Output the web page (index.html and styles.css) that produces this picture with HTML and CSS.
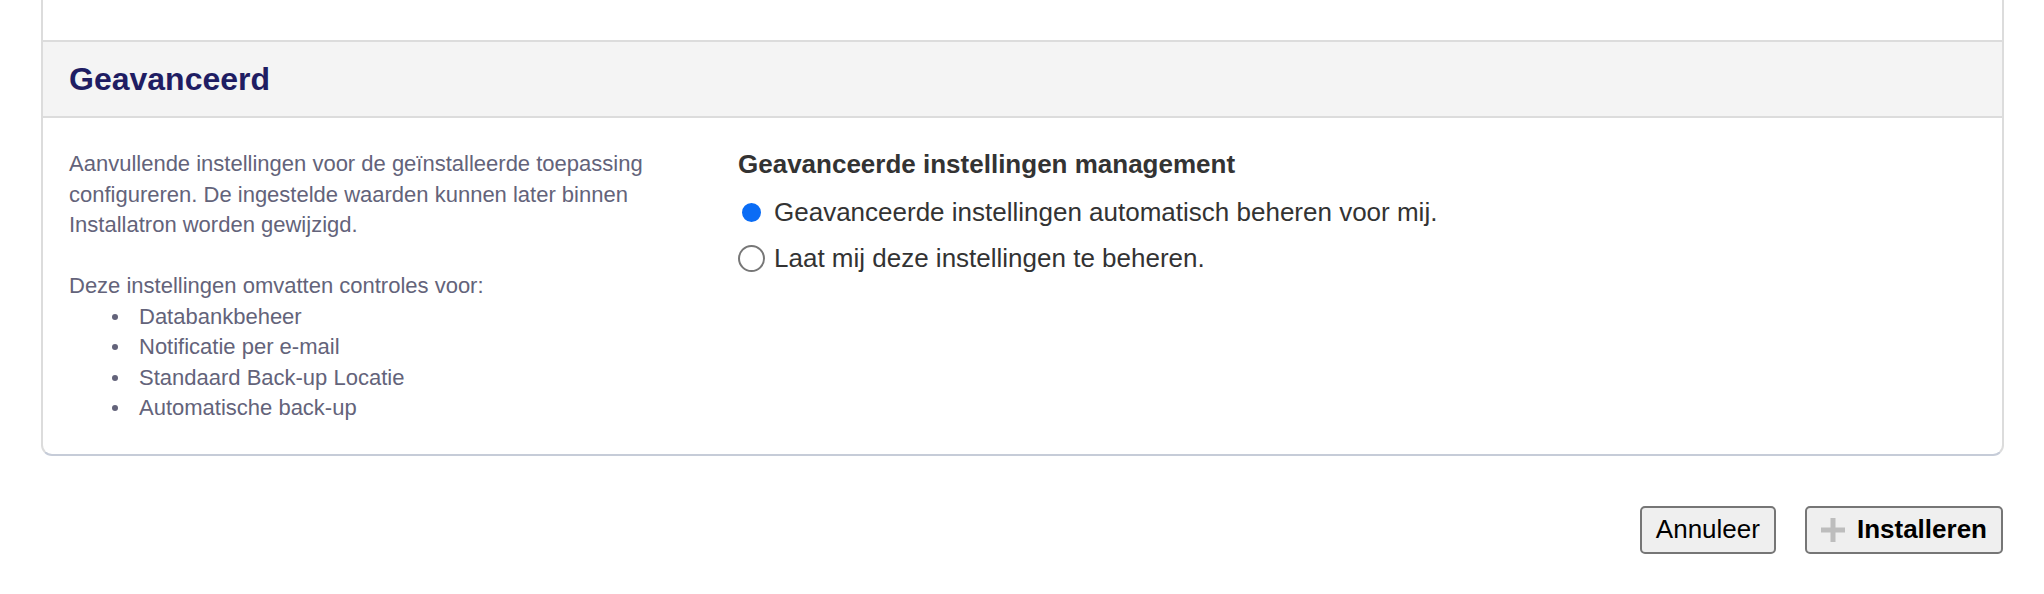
FILE: index.html
```html
<!DOCTYPE html>
<html lang="nl">
<head>
<meta charset="utf-8">
<title>Geavanceerd</title>
<link rel="stylesheet" href="styles.css">
</head>
<body>
<div class="card">
  <div class="prev-section"></div>
  <div class="section-head">
    <h2 class="section-title">Geavanceerd</h2>
  </div>
  <div class="section-body">
    <div class="col-info">
      <p class="info-text">Aanvullende instellingen voor de geïnstalleerde toepassing configureren. De ingestelde waarden kunnen later binnen Installatron worden gewijzigd.<br><br>Deze instellingen omvatten controles voor:</p>
      <ul class="info-list">
        <li>Databankbeheer</li>
        <li>Notificatie per e-mail</li>
        <li>Standaard Back-up Locatie</li>
        <li>Automatische back-up</li>
      </ul>
    </div>
    <div class="col-form">
      <div class="field-label">Geavanceerde instellingen management</div>
      <label class="radio-row"><input class="radio" type="radio" name="adv" checked><span>Geavanceerde instellingen automatisch beheren voor mij.</span></label>
      <label class="radio-row"><input class="radio" type="radio" name="adv"><span>Laat mij deze instellingen te beheren.</span></label>
    </div>
  </div>
</div>
<div class="actions">
  <button class="btn" type="button">Annuleer</button>
  <button class="btn btn-primary" type="button"><svg class="plus" width="24" height="24" viewBox="0 0 24 24" aria-hidden="true"><rect x="9.5" y="0" width="5" height="24" fill="#bdbdbd"/><rect x="0" y="9.5" width="24" height="5" fill="#bdbdbd"/></svg><span>Installeren</span></button>
</div>
</body>
</html>
```

FILE: styles.css
```css
* { box-sizing: border-box; }

html, body {
  margin: 0;
  padding: 0;
  background: #ffffff;
  font-family: "Liberation Sans", Arial, Helvetica, sans-serif;
}

.card {
  margin: 0 40px 0 41px;
  border: 2px solid #dcdcdc;
  border-top: none;
  border-bottom-color: #c6ccd8;
  border-radius: 0 0 11px 11px;
  background: #ffffff;
}

.prev-section {
  height: 40px;
}

.section-head {
  background: #f4f4f4;
  border-top: 2px solid #dcdcdc;
  border-bottom: 2px solid #dcdcdc;
  height: 78px;
  display: flex;
  align-items: center;
  padding: 0 26px;
}

.section-title {
  margin: 0;
  font-size: 32px;
  font-weight: bold;
  color: #1f1d63;
  line-height: 1;
}

.section-body {
  display: grid;
  grid-template-columns: 669px 1fr;
  padding: 31px 26px 30px 26px;
}

.info-text {
  margin: 0;
  font-size: 22px;
  line-height: 30.5px;
  color: #63637a;
  max-width: 645px;
}

.info-list {
  list-style: none;
  margin: 0;
  padding: 0;
  font-size: 22px;
  line-height: 30.5px;
  color: #63637a;
}

.info-list li {
  display: flex;
  align-items: center;
}

.info-list li::before {
  content: "";
  width: 6px;
  height: 6px;
  border-radius: 50%;
  background: #63637a;
  margin: 0 21px 0 43px;
  flex: none;
}

.field-label {
  font-size: 26px;
  font-weight: bold;
  color: #333333;
  line-height: 30px;
  margin-bottom: 10px;
}

.radio-row {
  display: flex;
  align-items: center;
  height: 46.5px;
  font-size: 26px;
  color: #333333;
  gap: 9px;
}

.radio {
  appearance: none;
  -webkit-appearance: none;
  margin: 0;
  width: 27px;
  height: 27px;
  border-radius: 50%;
  border: 2px solid #777777;
  background: #ffffff;
  flex: none;
}

.radio:checked {
  border: 4.5px solid #ffffff;
  background: #0a6cf5;
}

.actions {
  display: flex;
  justify-content: flex-end;
  gap: 29px;
  margin: 50px 41px 0 0;
}

.btn {
  height: 48px;
  padding: 0 14px;
  border: 2px solid #767676;
  border-radius: 5px;
  background: #efefef;
  font-family: "Liberation Sans", Arial, Helvetica, sans-serif;
  font-size: 26px;
  color: #000000;
  display: flex;
  align-items: center;
}

.btn-primary {
  font-weight: bold;
  gap: 12px;
}

.plus {
  flex: none;
}
```
